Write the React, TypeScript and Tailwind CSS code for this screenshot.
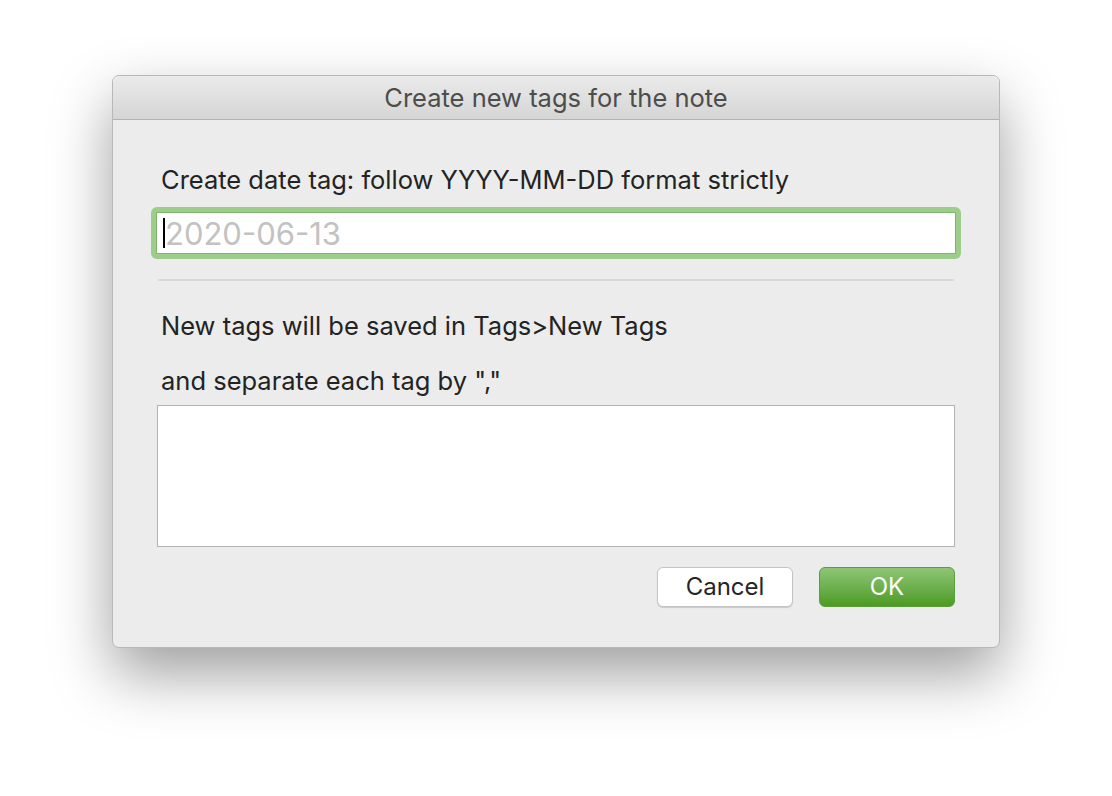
import React from "react";

export default function App() {
  return (
    <div
      className="min-h-[796px] w-full bg-white flex justify-center pt-[75px]"
      style={{ fontFamily: "Inter, 'Liberation Sans', sans-serif" }}
    >
      <div className="w-[888px] h-[573px] flex flex-col rounded-[7px] bg-[#ececec] border border-[#b8b8b8] shadow-[0_26px_60px_rgba(0,0,0,0.38)] overflow-hidden">
        {/* Title bar */}
        <div className="h-[44px] shrink-0 flex items-center justify-center bg-gradient-to-b from-[#ebebeb] to-[#d5d5d5] border-b border-[#b4b4b4]">
          <span className="text-[25.5px] leading-[30px] text-[#4d4d4d]">Create new tags for the note</span>
        </div>

        {/* Body */}
        <div className="flex flex-col px-[44px] pt-[45px]">
          <label className="text-[25.5px] text-[#232323] leading-[30px] pl-[4px]">
            Create date tag: follow YYYY-MM-DD format strictly
          </label>

          <div className="mt-[12px] -ml-[6px] -mr-[6px] rounded-[6px] bg-[#9ccd8b] p-[5px]">
            <div className="h-[42px] bg-white border border-[#7fb56d] flex items-center pl-[6px]">
              <span className="w-[2px] h-[30px] bg-black" />
              <span className="text-[31px] text-[#c2c2c2] leading-none">2020-06-13</span>
            </div>
          </div>

          <div className="mt-[20px] h-[2px] bg-[#d8d8d8] mx-[1px]" />

          <p className="mt-[30px] text-[25.5px] text-[#232323] leading-[30px] pl-[4px]">
            New tags will be saved in Tags&gt;New Tags
          </p>
          <p className="mt-[25px] text-[25.5px] text-[#232323] leading-[30px] pl-[4px]">
            and separate each tag by ","
          </p>

          <div className="mt-[9px] h-[142px] bg-white border border-[#b3b3b3]" />

          <div className="mt-[20px] flex justify-end gap-[26px]">
            <button className="w-[136px] h-[40px] rounded-[6px] bg-white border border-[#c4c4c4] shadow-[0_1px_1px_rgba(0,0,0,0.15)] text-[24px] text-[#262626]">
              Cancel
            </button>
            <button className="w-[136px] h-[40px] rounded-[6px] bg-gradient-to-b from-[#8fc576] to-[#4b9c1d] border border-[#5a9f3a] text-[24px] text-white">
              OK
            </button>
          </div>
        </div>
      </div>
    </div>
  );
}
